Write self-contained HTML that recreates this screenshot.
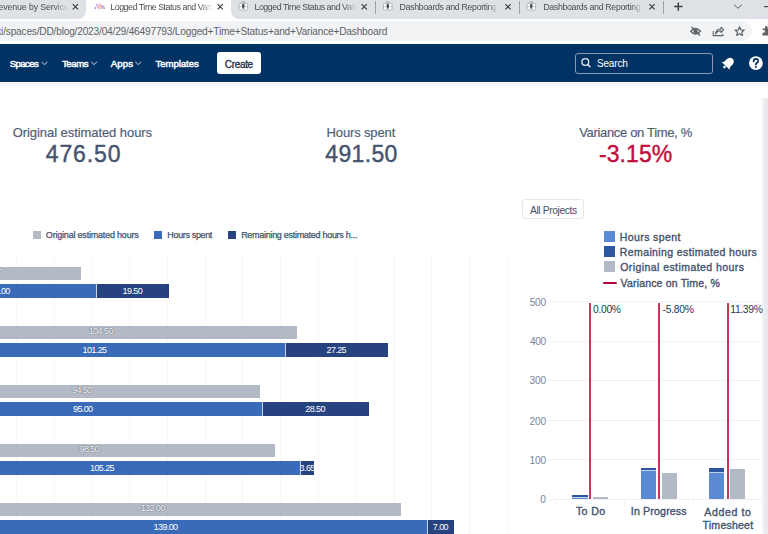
<!DOCTYPE html>
<html><head><meta charset="utf-8">
<style>
*{margin:0;padding:0;box-sizing:border-box}
html,body{width:768px;height:534px;overflow:hidden;background:#fff;font-family:"Liberation Sans",sans-serif}
.a{position:absolute;white-space:nowrap}
#tabs{position:absolute;left:0;top:0;width:768px;height:18.5px;background:#dee1e6}
.tt{position:absolute;top:1px;font-size:9px;color:#3c4043;line-height:12px;white-space:nowrap}
.x{position:absolute;top:3px;width:9px;height:9px}
.sep{position:absolute;top:1px;width:1px;height:13px;background:#9aa0a6}
#nav{position:absolute;left:0;top:43.8px;width:768px;height:38.7px;background:#003363}
.chev{position:absolute;top:62px;width:4px;height:4px;border-right:1px solid #8d9cb5;border-bottom:1px solid #8d9cb5;transform:rotate(45deg)}
.grid{position:absolute;top:252.6px;width:1px;height:282px;background:#f7f7f9}
.gb{position:absolute;height:13.2px;background:#b3bac5}
.bb{position:absolute;height:13.6px;background:#3a6bb8}
.nb{position:absolute;height:13.6px;background:#26437f}
.bl{position:absolute;font-size:9px;line-height:13.2px;color:#fff;text-align:center;width:60px;letter-spacing:-0.6px;white-space:nowrap}
.gl{color:#f7f8fa;text-shadow:0 0 1px #6f7785,0 0 1px #6f7785,0 0 1px #6f7785}
.sepb{position:absolute;width:1px;height:13.6px;background:#c9d3e6}
.lsq{position:absolute;top:231px;width:8px;height:8px}
.rsq{position:absolute;left:604px;width:11px;height:11px}
.hg{position:absolute;left:549.3px;width:213px;height:1px;background:#f3f4f6}
.tk{position:absolute;top:499px;width:1px;height:7px;background:#f1f2f4}
.cb{position:absolute}
.rline{position:absolute;top:302.5px;width:2px;height:196.7px;background:#c3375a}
</style></head><body>
<div style="position:absolute;left:0;top:0;width:86px;height:18.7px;background:#dee1e6;border-bottom-right-radius:8px"></div>
<div style="position:absolute;left:231px;top:0;width:537px;height:18.7px;background:#dee1e6;border-bottom-left-radius:8px"></div>
<div class="sep" style="left:375px"></div>
<div class="sep" style="left:519px"></div>
<div class="sep" style="left:663px"></div>
<div style="position:absolute;left:-20px;top:20.9px;width:772px;height:20px;background:#f1f3f4;border-radius:10px"></div>
<svg class="a" style="left:0;top:0" width="768" height="44" viewBox="0 0 768 44">
 <g stroke="#3c4043" stroke-width="1.2" stroke-linecap="butt" fill="none">
  <path d="M72.8 4.2 L78.0 9.4 M78.0 4.2 L72.8 9.4"/>
  <path d="M217.6 4.2 L222.8 9.4 M222.8 4.2 L217.6 9.4"/>
  <path d="M361.6 4.2 L366.8 9.4 M366.8 4.2 L361.6 9.4"/>
  <path d="M505.4 4.2 L510.6 9.4 M510.6 4.2 L505.4 9.4"/>
  <path d="M649.4 4.2 L654.6 9.4 M654.6 4.2 L649.4 9.4"/>
  <path d="M678.3 2.4 V10.8 M674.1 6.6 H682.5" stroke-width="1.5"/>
  <path d="M734 4.5 L738 8.3 L742 4.5" stroke="#5f6368" stroke-width="1"/>
  <path d="M764 6.6 H770" stroke-width="1.1"/>
 </g>
 <!-- favicon active -->
 <g stroke-width="1.7" stroke-linecap="round" opacity="0.6">
  <path d="M95.2 8.2 L95.6 7.6" stroke="#4f63e0"/>
  <path d="M96.6 4.4 L99.4 8.4" stroke="#b57ae0"/>
  <path d="M99.4 4.2 L102.2 8.4" stroke="#f0806a"/>
  <path d="M102.2 5.6 L104.4 8.4" stroke="#8f7ae8"/>
  <path d="M98.4 6.6 L99.8 8.4" stroke="#f08a7a"/>
 </g>
 <!-- grid favicons -->
 <g>
  <rect x="239" y="3.4" width="8.6" height="6.6" rx="1" fill="#fff" stroke="#a9aeb6" stroke-width="0.9"/>
  <path d="M239 6.7 H247.6" stroke="#b9bec5" stroke-width="0.8"/>
  <rect x="241.8" y="1.2" width="3" height="2.4" fill="#b4b9c0"/>
  <path d="M242 4.3 H244.6 L244.2 8.3 L243.3 9.1 L242.4 8.3 Z" fill="#3d4450"/>
 </g>
 <g transform="translate(144.5 0)">
  <rect x="239" y="3.4" width="8.6" height="6.6" rx="1" fill="#fff" stroke="#a9aeb6" stroke-width="0.9"/>
  <path d="M239 6.7 H247.6" stroke="#b9bec5" stroke-width="0.8"/>
  <rect x="241.8" y="1.2" width="3" height="2.4" fill="#b4b9c0"/>
  <path d="M242 4.3 H244.6 L244.2 8.3 L243.3 9.1 L242.4 8.3 Z" fill="#3d4450"/>
 </g>
 <g transform="translate(288 0)">
  <rect x="239" y="3.4" width="8.6" height="6.6" rx="1" fill="#fff" stroke="#a9aeb6" stroke-width="0.9"/>
  <path d="M239 6.7 H247.6" stroke="#b9bec5" stroke-width="0.8"/>
  <rect x="241.8" y="1.2" width="3" height="2.4" fill="#b4b9c0"/>
  <path d="M242 4.3 H244.6 L244.2 8.3 L243.3 9.1 L242.4 8.3 Z" fill="#3d4450"/>
 </g>
 
 <!-- omnibox icons -->
 <g fill="none" stroke="#5f6368" stroke-width="1.4">
  <path d="M690.8 31.2 Q695.6 25.6 700.4 31.2 Q695.6 36.8 690.8 31.2 Z"/>
  <circle cx="695.6" cy="31.2" r="1.5" fill="#5f6368"/>
  <path d="M691.5 27 L700 35.5"/>
  <path d="M713.2 31 V35.6 H722.8 V33.8" stroke-width="1.1"/>
  <path d="M715.5 34 Q716 29 721 29 V27.2 L723.5 29.9 L721 32.6 V30.8 Q717.5 30.8 715.5 34 Z" stroke-width="1.1" stroke-linejoin="round"/>
  <path d="M739.6 26.8 L740.9 29.9 L744.2 30.1 L741.7 32.2 L742.5 35.4 L739.6 33.7 L736.7 35.4 L737.5 32.2 L735 30.1 L738.3 29.9 Z" stroke-width="1.2" stroke-linejoin="round"/>
 </g>
 <path d="M762.5 28.5 H765 V27.3 A1.3 1.3 0 0 1 767.6 27.3 V28.5 H770 V35.5 H762.5 V32.8 H763.6 A1.4 1.4 0 0 0 763.6 30 H762.5 Z" fill="#5f6368"/>
</svg>
<div id="nav"></div>
<svg class="a" style="left:0;top:44px" width="200" height="38" viewBox="0 44 200 38"><g fill="none" stroke="#8d9dba" stroke-width="1.2" stroke-linecap="round" stroke-linejoin="round">
<path d="M41.9 62.1 L44.5 64.7 L47.1 62.1"/><path d="M91.4 62.1 L94 64.7 L96.6 62.1"/><path d="M135.6 62.1 L138.2 64.7 L140.8 62.1"/></g></svg>
<div style="position:absolute;left:217px;top:52.4px;width:44.2px;height:22px;background:#fff;border-radius:3px"></div>
<div style="position:absolute;left:575.2px;top:52.5px;width:137.4px;height:21.7px;border:1.3px solid #8d9ab0;border-radius:3px"></div>
<svg class="a" style="left:560px;top:44px" width="208" height="38" viewBox="560 44 208 38">
 <circle cx="585.3" cy="62" r="3.4" fill="none" stroke="#e6ebf2" stroke-width="1.3"/>
 <path d="M587.8 64.5 L590 66.8" stroke="#e6ebf2" stroke-width="1.4" stroke-linecap="round"/>
 <g transform="translate(728.3 63.2) rotate(45)">
  <path d="M0 -6.2 C-3 -6.2 -4 -3.6 -4 -1.2 L-4 1.8 L-5.6 3.8 L5.6 3.8 L4 1.8 L4 -1.2 C4 -3.6 3 -6.2 0 -6.2 Z" fill="#fff"/>
  <circle cx="0" cy="5.4" r="1.3" fill="#fff"/>
 </g>
 <circle cx="755.9" cy="63.1" r="6.9" fill="#fff"/>
 <path d="M753.6 61.3 Q753.6 58.9 755.9 58.9 Q758.2 58.9 758.2 61 Q758.2 62.4 756.6 63.1 Q755.9 63.5 755.9 64.6" fill="none" stroke="#002d62" stroke-width="1.7" stroke-linecap="round"/>
 <circle cx="755.9" cy="66.9" r="1" fill="#002d62"/>
</svg>
<div style="position:absolute;left:0;top:82.5px;width:768px;height:3.5px;background:linear-gradient(#eceef1,#fff)"></div>

<div class="grid" style="left:15.80px"></div>
<div class="grid" style="left:53.58px"></div>
<div class="grid" style="left:91.36px"></div>
<div class="grid" style="left:129.14px"></div>
<div class="grid" style="left:166.92px"></div>
<div class="grid" style="left:204.70px"></div>
<div class="grid" style="left:242.48px"></div>
<div class="grid" style="left:280.26px"></div>
<div class="grid" style="left:318.04px"></div>
<div class="grid" style="left:355.82px"></div>
<div class="grid" style="left:393.60px"></div>
<div class="grid" style="left:431.38px"></div>
<div class="grid" style="left:469.16px"></div>
<div class="grid" style="left:506.94px"></div>
<div class="gb" style="left:-96.0px;top:266.60px;width:177.00px"></div>
<div class="bb" style="left:-96.0px;top:284.30px;width:192.00px"></div>
<div class="nb" style="left:97.00px;top:284.30px;width:71.70px"></div>
<div class="sepb" style="left:96.00px;top:284.30px"></div>
<div class="bl gl" style="left:-37.50px;top:265.80px">47.00</div>
<div class="bl" style="left:-30.00px;top:285.10px">51.00</div>
<div class="bl" style="left:102.35px;top:285.10px">19.50</div>
<div class="gb" style="left:-96.0px;top:325.60px;width:393.20px"></div>
<div class="bb" style="left:-96.0px;top:343.30px;width:381.00px"></div>
<div class="nb" style="left:286.00px;top:343.30px;width:101.50px"></div>
<div class="sepb" style="left:285.00px;top:343.30px"></div>
<div class="bl gl" style="left:70.60px;top:324.80px">104.50</div>
<div class="bl" style="left:64.50px;top:344.10px">101.25</div>
<div class="bl" style="left:306.25px;top:344.10px">27.25</div>
<div class="gb" style="left:-96.0px;top:384.60px;width:355.50px"></div>
<div class="bb" style="left:-96.0px;top:402.30px;width:357.50px"></div>
<div class="nb" style="left:262.50px;top:402.30px;width:106.20px"></div>
<div class="sepb" style="left:261.50px;top:402.30px"></div>
<div class="bl gl" style="left:51.75px;top:383.80px">94.50</div>
<div class="bl" style="left:52.75px;top:403.10px">95.00</div>
<div class="bl" style="left:285.10px;top:403.10px">28.50</div>
<div class="gb" style="left:-96.0px;top:443.60px;width:370.50px"></div>
<div class="bb" style="left:-96.0px;top:461.30px;width:396.00px"></div>
<div class="nb" style="left:301.00px;top:461.30px;width:13.30px"></div>
<div class="sepb" style="left:300.00px;top:461.30px"></div>
<div class="bl gl" style="left:59.25px;top:442.80px">98.50</div>
<div class="bl" style="left:72.00px;top:462.10px">105.25</div>
<div class="bl" style="left:277.15px;top:462.10px">3.65</div>
<div class="gb" style="left:-96.0px;top:502.60px;width:497.20px"></div>
<div class="bb" style="left:-96.0px;top:520.30px;width:523.10px"></div>
<div class="nb" style="left:428.10px;top:520.30px;width:25.60px"></div>
<div class="sepb" style="left:427.10px;top:520.30px"></div>
<div class="bl gl" style="left:122.60px;top:501.80px">132.00</div>
<div class="bl" style="left:135.55px;top:521.10px">139.00</div>
<div class="bl" style="left:410.40px;top:521.10px">7.00</div>
<div class="lsq" style="left:33px;background:#b3bac5"></div>
<div class="lsq" style="left:154.3px;background:#3a6bb8"></div>
<div class="lsq" style="left:228.2px;background:#26437f"></div>
<div style="position:absolute;left:522.3px;top:198.8px;width:61.5px;height:20.5px;border:1px solid #e6e8eb;border-radius:3px"></div>
<div class="rsq" style="top:230.7px;background:#5a8ad3"></div>
<div class="rsq" style="top:245.8px;background:#2d55a0"></div>
<div class="rsq" style="top:260.9px;background:#b3bac5"></div>
<div style="position:absolute;left:602.9px;top:281.6px;width:13.8px;height:2.9px;background:#b3083a;border-radius:1.2px"></div>
<div class="hg" style="top:301.1px"></div>
<div class="hg" style="top:340.6px"></div>
<div class="hg" style="top:380.1px"></div>
<div class="hg" style="top:419.6px"></div>
<div class="hg" style="top:459.1px"></div>
<div class="hg" style="top:498.6px;background:#eff0f2"></div>
<div class="tk" style="left:555.2px"></div>
<div class="tk" style="left:623.7px"></div>
<div class="tk" style="left:692.7px"></div>
<div class="tk" style="left:761.1px"></div>
<div class="cb" style="left:571.9px;top:494.8px;width:16px;height:2px;background:#2d55a0"></div>
<div class="cb" style="left:571.9px;top:496.8px;width:16px;height:0.8px;background:#c0d0ea"></div>
<div class="cb" style="left:571.9px;top:497.6px;width:16px;height:1.6px;background:#5a8ad3"></div>
<div class="cb" style="left:592.8px;top:497px;width:15.5px;height:2.2px;background:#b3bac5"></div>
<div class="cb" style="left:640.9px;top:467.8px;width:15.5px;height:2.2px;background:#2d55a0"></div>
<div class="cb" style="left:640.9px;top:470px;width:15.5px;height:1.1px;background:#c0d0ea"></div>
<div class="cb" style="left:640.9px;top:471.1px;width:15.5px;height:28px;background:#5a8ad3"></div>
<div class="cb" style="left:661.5px;top:473.1px;width:15.5px;height:26px;background:#b3bac5"></div>
<div class="cb" style="left:708.9px;top:467.8px;width:15.5px;height:3.8px;background:#2d55a0"></div>
<div class="cb" style="left:708.9px;top:471.6px;width:15.5px;height:1.3px;background:#c0d0ea"></div>
<div class="cb" style="left:708.9px;top:472.9px;width:15.5px;height:26.2px;background:#5a8ad3"></div>
<div class="cb" style="left:729.8px;top:469.1px;width:15.2px;height:30px;background:#b3bac5"></div>
<div class="rline" style="left:589.4px"></div>
<div class="rline" style="left:658.2px"></div>
<div class="rline" style="left:726.5px"></div>
<div style="position:absolute;left:761.8px;top:98.2px;width:6.2px;height:436px;background:linear-gradient(90deg,#f5f6f8,#eaebef 55%,#e4e6ea 88%,#f2f3f5)"></div>

<div class="a" style="left:0px;top:0;width:68px;height:60px;overflow:hidden;-webkit-mask-image:linear-gradient(90deg,#000 54px,transparent 68px);"><div class="a" style="left:-7.79px;top:2.48px;font-size:8.8px;line-height:10.12px;color:#4a4d52;font-weight:normal;letter-spacing:-0.123px;">Revenue by Service</div></div>
<div class="a" style="left:108px;top:0;width:105px;height:60px;overflow:hidden;-webkit-mask-image:linear-gradient(90deg,#000 91px,transparent 105px);"><div class="a" style="left:2.25px;top:1.57px;font-size:8.8px;line-height:10.12px;color:#4a4d52;font-weight:normal;letter-spacing:-0.446px;">Logged Time Status and Variance</div></div>
<div class="a" style="left:252px;top:0;width:105px;height:60px;overflow:hidden;-webkit-mask-image:linear-gradient(90deg,#000 91px,transparent 105px);"><div class="a" style="left:2.48px;top:1.77px;font-size:8.8px;line-height:10.12px;color:#4a4d52;font-weight:normal;letter-spacing:-0.452px;">Logged Time Status and Variance</div></div>
<div class="a" style="left:397px;top:0;width:102px;height:60px;overflow:hidden;-webkit-mask-image:linear-gradient(90deg,#000 90px,transparent 102px);"><div class="a" style="left:2.56px;top:1.96px;font-size:8.8px;line-height:10.12px;color:#4a4d52;font-weight:normal;letter-spacing:-0.334px;">Dashboards and Reporting</div></div>
<div class="a" style="left:541px;top:0;width:102px;height:60px;overflow:hidden;-webkit-mask-image:linear-gradient(90deg,#000 90px,transparent 102px);"><div class="a" style="left:2.27px;top:2.18px;font-size:8.8px;line-height:10.12px;color:#4a4d52;font-weight:normal;letter-spacing:-0.330px;">Dashboards and Reporting</div></div>
<div class="a" style="left:0px;top:0;width:752px;height:60px;overflow:hidden;"><div class="a" style="left:-3.79px;top:26.02px;font-size:10.2px;line-height:11.73px;color:#5f6368;font-weight:normal;letter-spacing:-0.218px;">ki/spaces/DD/blog/2023/04/29/46497793/Logged+Time+Status+and+Variance+Dashboard</div></div>
<div class="a" style="left:12.75px;top:125.93px;font-size:13px;line-height:14.95px;color:#505f79;font-weight:normal;letter-spacing:-0.069px;-webkit-text-stroke:0.2px #505f79">Original estimated hours</div>
<div class="a" style="left:45.69px;top:140.72px;font-size:23px;line-height:26.45px;color:#44546f;font-weight:normal;letter-spacing:0.905px;-webkit-text-stroke:0.4px #44546f">476.50</div>
<div class="a" style="left:326.59px;top:125.93px;font-size:13px;line-height:14.95px;color:#505f79;font-weight:normal;letter-spacing:-0.143px;-webkit-text-stroke:0.2px #505f79">Hours spent</div>
<div class="a" style="left:325.30px;top:140.72px;font-size:23px;line-height:26.45px;color:#44546f;font-weight:normal;letter-spacing:0.333px;-webkit-text-stroke:0.4px #44546f">491.50</div>
<div class="a" style="left:579.18px;top:125.93px;font-size:13px;line-height:14.95px;color:#505f79;font-weight:normal;letter-spacing:-0.329px;-webkit-text-stroke:0.2px #505f79">Variance on Time, %</div>
<div class="a" style="left:598.97px;top:140.70px;font-size:23px;line-height:26.45px;color:#bf0d3e;font-weight:normal;letter-spacing:0.084px;-webkit-text-stroke:0.4px #bf0d3e">-3.15%</div>
<div class="a" style="left:9.67px;top:57.53px;font-size:9.6px;line-height:11.04px;color:#ffffff;font-weight:normal;letter-spacing:-0.567px;-webkit-text-stroke:0.45px #ffffff">Spaces</div>
<div class="a" style="left:61.97px;top:57.53px;font-size:9.6px;line-height:11.04px;color:#ffffff;font-weight:normal;letter-spacing:-0.434px;-webkit-text-stroke:0.45px #ffffff">Teams</div>
<div class="a" style="left:110.77px;top:57.53px;font-size:9.6px;line-height:11.04px;color:#ffffff;font-weight:normal;letter-spacing:0.105px;-webkit-text-stroke:0.45px #ffffff">Apps</div>
<div class="a" style="left:155.41px;top:57.53px;font-size:9.6px;line-height:11.04px;color:#ffffff;font-weight:normal;letter-spacing:-0.041px;-webkit-text-stroke:0.45px #ffffff">Templates</div>
<div class="a" style="left:224.79px;top:59.12px;font-size:10px;line-height:11.50px;color:#172b4d;font-weight:normal;letter-spacing:-0.329px;-webkit-text-stroke:0.3px #172b4d">Create</div>
<div class="a" style="left:596.88px;top:58.36px;font-size:10px;line-height:11.50px;color:#ffffff;font-weight:normal;letter-spacing:-0.138px;">Search</div>
<div class="a" style="left:529.92px;top:204.57px;font-size:10.3px;line-height:11.85px;color:#42526e;font-weight:normal;letter-spacing:-0.382px;">All Projects</div>
<div class="a" style="left:45.83px;top:230.03px;font-size:9px;line-height:10.35px;color:#42526e;font-weight:normal;letter-spacing:-0.201px;-webkit-text-stroke:0.25px #42526e">Original estimated hours</div>
<div class="a" style="left:167.36px;top:230.03px;font-size:9px;line-height:10.35px;color:#42526e;font-weight:normal;letter-spacing:-0.356px;-webkit-text-stroke:0.25px #42526e">Hours spent</div>
<div class="a" style="left:241.15px;top:230.07px;font-size:9px;line-height:10.35px;color:#42526e;font-weight:normal;letter-spacing:-0.287px;-webkit-text-stroke:0.25px #42526e">Remaining estimated hours h...</div>
<div class="a" style="left:619.85px;top:230.84px;font-size:10.5px;line-height:12.07px;color:#42526e;font-weight:normal;letter-spacing:0.391px;-webkit-text-stroke:0.35px #42526e">Hours spent</div>
<div class="a" style="left:619.85px;top:246.49px;font-size:10.5px;line-height:12.07px;color:#42526e;font-weight:normal;letter-spacing:0.383px;-webkit-text-stroke:0.35px #42526e">Remaining estimated hours</div>
<div class="a" style="left:620.17px;top:261.45px;font-size:10.5px;line-height:12.07px;color:#42526e;font-weight:normal;letter-spacing:0.434px;-webkit-text-stroke:0.35px #42526e">Original estimated hours</div>
<div class="a" style="left:620.54px;top:277.11px;font-size:10.5px;line-height:12.07px;color:#42526e;font-weight:normal;letter-spacing:0.178px;-webkit-text-stroke:0.35px #42526e">Variance on Time, %</div>
<div class="a" style="left:529.69px;top:297.32px;font-size:10.2px;line-height:11.73px;color:#7a869a;font-weight:normal;letter-spacing:-0.281px;">500</div>
<div class="a" style="left:529.93px;top:336.40px;font-size:10.2px;line-height:11.73px;color:#7a869a;font-weight:normal;letter-spacing:-0.383px;">400</div>
<div class="a" style="left:529.58px;top:375.46px;font-size:10.2px;line-height:11.73px;color:#7a869a;font-weight:normal;letter-spacing:-0.226px;">300</div>
<div class="a" style="left:529.50px;top:415.59px;font-size:10.2px;line-height:11.73px;color:#7a869a;font-weight:normal;letter-spacing:-0.217px;">200</div>
<div class="a" style="left:529.38px;top:454.63px;font-size:10.2px;line-height:11.73px;color:#7a869a;font-weight:normal;letter-spacing:-0.089px;">100</div>
<div class="a" style="left:540.20px;top:494.00px;font-size:10.2px;line-height:11.73px;color:#7a869a;font-weight:normal;letter-spacing:0.000px;">0</div>
<div class="a" style="left:593.07px;top:304.28px;font-size:10.3px;line-height:11.85px;color:#253858;font-weight:normal;letter-spacing:-0.321px;">0.00%</div>
<div class="a" style="left:662.48px;top:304.28px;font-size:10.3px;line-height:11.85px;color:#253858;font-weight:normal;letter-spacing:-0.219px;">-5.80%</div>
<div class="a" style="left:730.26px;top:304.28px;font-size:10.3px;line-height:11.85px;color:#253858;font-weight:normal;letter-spacing:-0.323px;">11.39%</div>
<div class="a" style="left:575.96px;top:505.48px;font-size:10.6px;line-height:12.19px;color:#42526e;font-weight:normal;letter-spacing:0.358px;-webkit-text-stroke:0.35px #42526e">To Do</div>
<div class="a" style="left:630.87px;top:505.47px;font-size:10.6px;line-height:12.19px;color:#42526e;font-weight:normal;letter-spacing:0.159px;-webkit-text-stroke:0.35px #42526e">In Progress</div>
<div class="a" style="left:704.29px;top:506.12px;font-size:10.6px;line-height:12.19px;color:#42526e;font-weight:normal;letter-spacing:0.604px;-webkit-text-stroke:0.35px #42526e">Added to</div>
<div class="a" style="left:702.55px;top:518.78px;font-size:10.6px;line-height:12.19px;color:#42526e;font-weight:normal;letter-spacing:0.192px;-webkit-text-stroke:0.35px #42526e">Timesheet</div>
</body></html>
